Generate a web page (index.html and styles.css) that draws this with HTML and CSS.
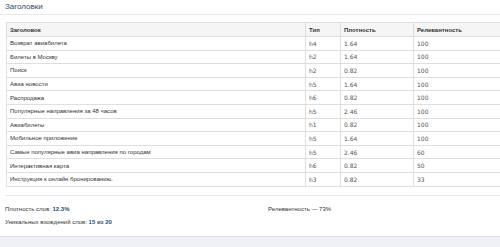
FILE: index.html
```html
<!DOCTYPE html>
<html>
<head>
<meta charset="utf-8">
<link rel="stylesheet" href="styles.css">
</head>
<body>
<div class="page">
  <div class="title">Заголовки</div>
  <div class="content">
    <table class="grid">
      <colgroup>
        <col class="c1"><col class="c2"><col class="c3"><col class="c4">
      </colgroup>
      <thead>
        <tr><th>Заголовок</th><th>Тип</th><th>Плотность</th><th>Релевантность</th></tr>
      </thead>
      <tbody>
        <tr><td>Возврат авиабилета</td><td class="num">h4</td><td class="num">1.64</td><td class="num">100</td></tr>
        <tr><td>Билеты в Москву</td><td class="num">h2</td><td class="num">1.64</td><td class="num">100</td></tr>
        <tr><td>Поиск</td><td class="num">h2</td><td class="num">0.82</td><td class="num">100</td></tr>
        <tr><td>Авиа новости</td><td class="num">h5</td><td class="num">1.64</td><td class="num">100</td></tr>
        <tr><td>Распродажа</td><td class="num">h6</td><td class="num">0.82</td><td class="num">100</td></tr>
        <tr><td>Популярные направления за 48 часов</td><td class="num">h5</td><td class="num">2.46</td><td class="num">100</td></tr>
        <tr><td>Авиабилеты</td><td class="num">h1</td><td class="num">0.82</td><td class="num">100</td></tr>
        <tr><td>Мобильное приложение</td><td class="num">h5</td><td class="num">1.64</td><td class="num">100</td></tr>
        <tr><td>Самые популярные авиа направления по городам</td><td class="num">h5</td><td class="num">2.46</td><td class="num">60</td></tr>
        <tr><td>Интерактивная карта</td><td class="num">h6</td><td class="num">0.82</td><td class="num">50</td></tr>
        <tr><td>Инструкция к онлайн бронированию.</td><td class="num">h3</td><td class="num">0.82</td><td class="num">33</td></tr>
      </tbody>
    </table>
    <div class="sep"></div>
  </div>
  <div class="stats">
    <div class="stat-col">
      <div class="stat">Плотность слов: <b>12.3%</b></div>
      <div class="stat">Уникальных вхождений слов: <b>15 из 20</b></div>
    </div>
    <div class="stat-col">
      <div class="stat">Релевантность — 73%</div>
    </div>
  </div>
  <div class="footer"></div>
</div>
</body>
</html>
```

FILE: styles.css
```css
html, body {
  margin: 0;
  padding: 0;
  background: #ffffff;
}
body {
  font-family: "Liberation Sans", Arial, sans-serif;
  color: #333333;
  width: 500px;
  height: 247px;
  overflow: hidden;
}
.page {
  display: flex;
  flex-direction: column;
  height: 247px;
}
.title {
  font-size: 8px;
  line-height: 13px;
  color: #2e4a66;
  padding-left: 5px;
  height: 14px;
  border-bottom: 1px solid #e6e8ec;
}
.content {
  padding: 7px 0 0 6px;
}
.grid {
  width: 494px;
  border-collapse: collapse;
  border: 1px solid #dcdcdc;
  border-right: none;
  font-size: 6px;
  table-layout: fixed;
}
.c1 { width: 299px; }
.c2 { width: 35px; }
.c3 { width: 73px; }
.c4 { width: 87px; }
.grid th, .grid td {
  border: 1px solid #dedede;
  border-right: none;
  padding: 0 0 0 3px;
  height: 12.6px;
  text-align: left;
  white-space: nowrap;
  overflow: hidden;
}
.grid th + th, .grid td + td {
  border-left: 1px solid #dedede;
}
.grid th {
  background: #f5f5f5;
  font-weight: bold;
  color: #333;
  height: 13px;
}
.grid td {
  background: #ffffff;
}
.num {
  font-family: "DejaVu Sans", Verdana, sans-serif;
  font-size: 6px;
  color: #555;
}
.sep {
  margin-top: 8px;
  border-top: 1px solid #e4e6ea;
}
.stats {
  display: grid;
  grid-template-columns: 263px 1fr;
  padding: 9px 0 0 5px;
  font-size: 6px;
  flex: 1;
}
.stat-col {
  display: flex;
  flex-direction: column;
  gap: 4px;
}
.stat {
  line-height: 9px;
  color: #333;
}
.stat b {
  color: #2b4f75;
  font-weight: bold;
}
.footer {
  height: 10px;
  background: #eef0f4;
  border-top: 1px solid #dde1e7;
}
```
